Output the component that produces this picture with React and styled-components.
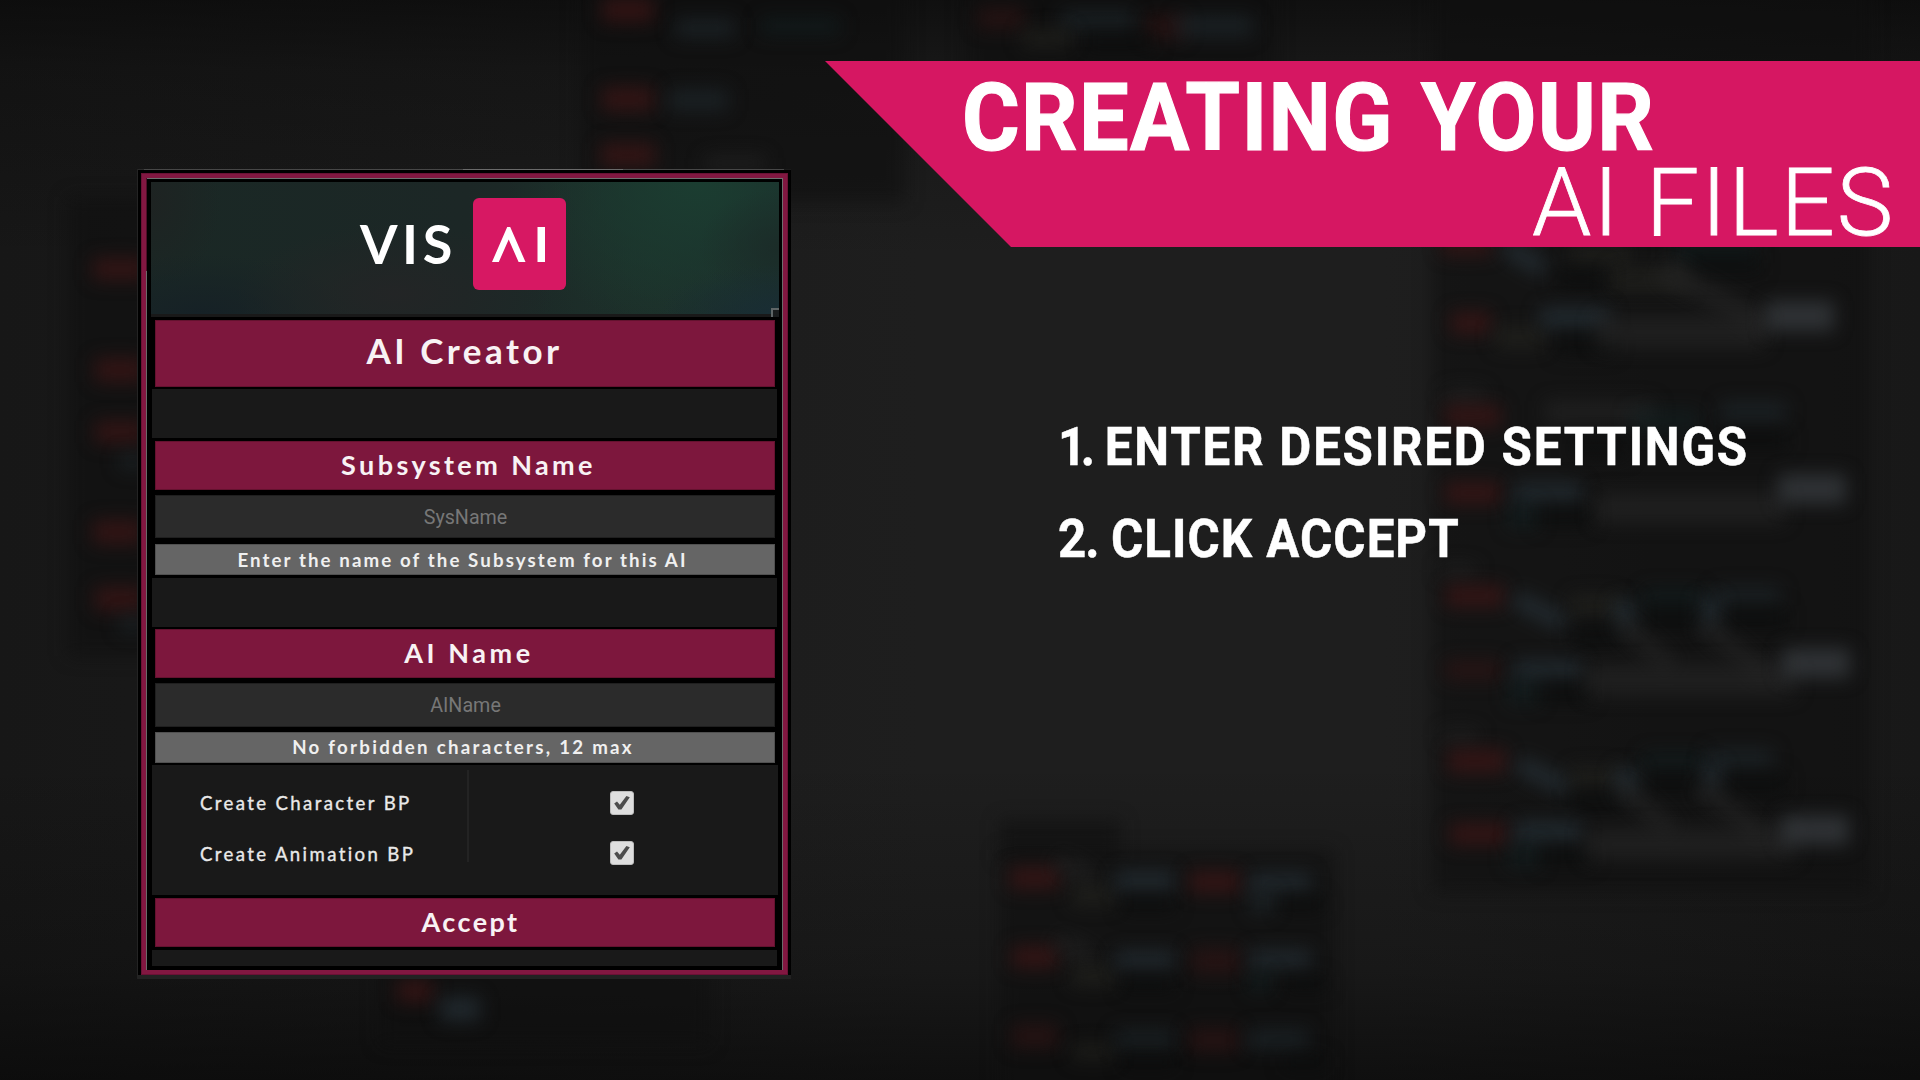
import React from 'react';
import styled, { createGlobalStyle, css } from 'styled-components';

const GlobalStyle = createGlobalStyle`
  * { box-sizing: border-box; }
  body { margin: 0; background: #111; }
`;

const geometric = '"Lato", "Liberation Sans", sans-serif';
const grotesque = '"Roboto", "Liberation Sans", sans-serif';

/* ---------- stage and blurred node graph ---------- */

const Stage = styled.main`
  position: relative;
  width: 1920px;
  height: 1080px;
  overflow: hidden;
  background:
    linear-gradient(180deg, rgba(8, 8, 8, 0.65) 0, rgba(8, 8, 8, 0.3) 70px, rgba(8, 8, 8, 0) 260px),
    linear-gradient(0deg, rgba(6, 6, 6, 0.62) 0, rgba(6, 6, 6, 0.25) 110px, rgba(6, 6, 6, 0) 320px),
    linear-gradient(90deg, #171717 0, #1a1a1a 20%, #1e1e1e 48%, #1e1e1e 72%, #181818 100%);
`;

const Backdrop = styled.div`
  position: absolute;
  inset: 0;
`;

const GraphGroup = styled.div`
  position: absolute;
  left: ${(p) => p.$x}px;
  top: ${(p) => p.$y}px;
  width: ${(p) => p.$w}px;
  height: ${(p) => p.$h}px;
  background: rgba(15, 15, 15, 0.6);
  filter: blur(9px);
`;

const tones = {
  red: 'rgba(64, 22, 22, 0.7)',
  dimRed: 'rgba(50, 20, 20, 0.6)',
  blue: 'rgba(38, 50, 57, 0.7)',
  dimBlue: 'rgba(31, 41, 47, 0.6)',
  teal: 'rgba(18, 35, 37, 0.45)',
  grey: 'rgba(54, 58, 61, 0.8)',
  olive: 'rgba(38, 38, 33, 0.55)',
  wire: 'rgba(38, 38, 38, 0.6)',
  black: 'rgba(10, 12, 12, 0.65)',
};

const Node = styled.div`
  position: absolute;
  left: ${(p) => p.$x - p.$w / 2}px;
  top: ${(p) => p.$y - p.$h / 2}px;
  width: ${(p) => p.$w}px;
  height: ${(p) => p.$h}px;
  background: ${(p) => tones[p.$tone]};
  filter: blur(9px);
  transform: rotate(${(p) => p.$turn || 0}deg);
`;

const groups = [
  [580, -20, 325, 222],
  [965, -20, 310, 110],
  [1432, -20, 438, 912],
  [68, 197, 120, 459],
  [380, 960, 330, 85],
  [1000, 820, 120, 40],
  [1000, 850, 334, 250],
];

const nodes = [
  ['red', 628, 10, 52, 24], ['red', 628, 99, 52, 24], ['red', 628, 155, 54, 24],
  ['dimBlue', 698, 100, 60, 22], ['dimBlue', 705, 28, 60, 20], ['teal', 800, 26, 80, 18],
  ['wire', 735, 163, 60, 14],
  ['dimRed', 1001, 18, 46, 22], ['dimRed', 1165, 27, 40, 24], ['dimBlue', 1098, 20, 74, 20],
  ['dimBlue', 1215, 26, 76, 22], ['olive', 1047, 38, 50, 18], ['black', 1120, 42, 70, 18],
  ['red', 120, 269, 54, 22], ['red', 120, 370, 50, 24], ['red', 120, 432, 50, 22],
  ['red', 118, 532, 50, 24], ['red', 120, 599, 50, 24],
  ['dimBlue', 132, 461, 24, 16], ['dimBlue', 132, 624, 24, 16],
  ['red', 415, 991, 36, 22], ['blue', 460, 1009, 40, 24],
  ['red', 1467, 246, 50, 18], ['blue', 1525, 258, 46, 18, 30], ['teal', 1715, 252, 80, 22],
  ['olive', 1600, 255, 60, 20], ['olive', 1650, 280, 80, 24], ['black', 1580, 278, 50, 22],
  ['black', 1725, 264, 70, 22], ['wire', 1715, 298, 120, 22, 28],
  ['red', 1471, 323, 40, 22], ['olive', 1520, 337, 50, 22], ['blue', 1575, 318, 70, 22],
  ['black', 1585, 344, 60, 22], ['wire', 1680, 332, 170, 32], ['grey', 1800, 316, 68, 30],
  ['wire', 1465, 396, 40, 14],
  ['red', 1473, 416, 56, 22], ['wire', 1600, 412, 110, 22], ['dimBlue', 1753, 412, 66, 20],
  ['teal', 1665, 420, 70, 22], ['black', 1755, 440, 66, 22], ['black', 1600, 448, 56, 20],
  ['red', 1473, 493, 56, 22], ['blue', 1548, 493, 68, 20], ['teal', 1523, 516, 32, 26],
  ['black', 1564, 516, 56, 22], ['wire', 1690, 508, 190, 30], ['grey', 1812, 489, 68, 30],
  ['wire', 1458, 571, 36, 12],
  ['red', 1475, 596, 58, 22], ['blue', 1540, 611, 56, 18, 26], ['olive', 1595, 606, 50, 22],
  ['blue', 1625, 614, 22, 28], ['teal', 1673, 598, 60, 20], ['dimBlue', 1747, 596, 66, 18],
  ['blue', 1710, 612, 22, 28], ['black', 1597, 634, 50, 22], ['black', 1672, 618, 54, 26],
  ['black', 1756, 618, 60, 24], ['wire', 1645, 644, 70, 18, 40], ['wire', 1735, 650, 84, 18, 38],
  ['dimRed', 1473, 670, 56, 20], ['blue', 1548, 670, 68, 20], ['teal', 1524, 692, 32, 26],
  ['black', 1564, 692, 54, 22], ['wire', 1690, 680, 210, 32], ['grey', 1816, 663, 68, 30],
  ['wire', 1460, 736, 36, 12],
  ['red', 1477, 761, 58, 24], ['blue', 1543, 776, 56, 18, 26], ['olive', 1595, 778, 50, 22],
  ['blue', 1627, 781, 24, 26], ['teal', 1673, 761, 60, 18], ['dimBlue', 1740, 759, 66, 20],
  ['blue', 1712, 777, 20, 24], ['black', 1597, 799, 50, 20], ['black', 1672, 784, 54, 24],
  ['black', 1755, 784, 60, 24], ['wire', 1645, 808, 70, 18, 40], ['wire', 1732, 812, 84, 18, 38],
  ['red', 1479, 834, 58, 22], ['blue', 1548, 832, 68, 22], ['teal', 1524, 856, 34, 24],
  ['black', 1566, 856, 54, 20], ['wire', 1690, 844, 210, 32], ['grey', 1815, 830, 68, 30],
  ['red', 1035, 878, 50, 22], ['wire', 1075, 870, 40, 16, 25], ['olive', 1093, 896, 44, 20],
  ['blue', 1145, 881, 60, 20], ['black', 1148, 904, 54, 16], ['red', 1215, 882, 52, 22],
  ['blue', 1280, 882, 62, 18], ['dimBlue', 1262, 902, 24, 22], ['black', 1302, 904, 44, 16],
  ['red', 1035, 957, 46, 22], ['wire', 1075, 950, 40, 16, 25], ['olive', 1093, 976, 44, 20],
  ['blue', 1145, 960, 60, 18], ['black', 1148, 984, 54, 16], ['dimRed', 1216, 961, 50, 26],
  ['blue', 1280, 959, 62, 18], ['teal', 1260, 982, 24, 20], ['black', 1305, 984, 44, 16],
  ['dimRed', 1035, 1036, 46, 24], ['olive', 1093, 1052, 44, 16], ['dimBlue', 1145, 1039, 60, 18],
  ['dimRed', 1214, 1040, 50, 24], ['dimBlue', 1278, 1039, 62, 20], ['black', 1148, 1062, 54, 14],
  ['black', 1305, 1062, 44, 14],
];

/* ---------- page layout ---------- */

const Content = styled.div`
  position: relative;
  display: flex;
  align-items: flex-start;
  height: 100%;
  padding-left: 137px;
`;

/* ---------- AI creator window ---------- */

const Window = styled.section`
  width: 654px;
  margin-top: 169px;
  padding-top: 1px;
  border-left: 1px solid #242424;
  border-bottom: 4px solid #222;
  background: linear-gradient(90deg, #2a2a2a 0 6px, #474747 6px 325px, #6a6a6a 325px 485px, #474747 485px 646px, #1a1a1a 646px)
    top / 100% 1px no-repeat;
`;

const Rim = styled.div`
  padding: 3px 3px 0;
  background: #000;
`;

const PinkFrame = styled.div`
  padding: 5px;
  background: #821741;
  box-shadow: inset 0 0 0 1px #6a1235;
`;

const Hairline = styled.div`
  padding: 1px 1px 0;
  background: linear-gradient(90deg, #4d0f28 0 1px, #6e6e6e 1px) top / 100% 93px no-repeat, #6a6a6a;
`;

const Body = styled.div`
  display: flex;
  flex-direction: column;
  padding: 3px 3px 4px 4px;
  background: #000;
`;

const Header = styled.header`
  position: relative;
  display: flex;
  align-items: flex-start;
  height: 135px;
  padding: 16px 0 0 208px;
  border-bottom: 3px solid #191919;
  background:
    radial-gradient(ellipse 120px 50px at 100% 100%, #192d34 0, rgba(25, 45, 52, 0) 100%),
    radial-gradient(ellipse 80px 60px at 100% 50%, rgba(27, 42, 39, 0.8) 0, rgba(27, 42, 39, 0) 100%),
    radial-gradient(ellipse 190px 150px at 87% 0%, #1b3d31 0, rgba(27, 61, 49, 0) 100%),
    radial-gradient(ellipse 120px 150px at 80% 60%, rgba(29, 51, 43, 0.8) 0, rgba(29, 51, 43, 0) 100%),
    radial-gradient(ellipse 160px 70px at 39% 85%, #232526 0, rgba(35, 37, 38, 0) 100%),
    radial-gradient(ellipse 150px 60px at 8% 100%, #162126 0, rgba(22, 33, 38, 0) 100%),
    radial-gradient(ellipse 70px 90px at 0 15%, #1e2322 0, rgba(30, 35, 34, 0) 100%),
    linear-gradient(90deg, #1a2825, #1c2726 50%, #1c2b28 68%, #1b2d2b);
`;

const ResizeGrip = styled.span`
  position: absolute;
  right: 0;
  bottom: -3px;
  width: 8px;
  height: 9px;
  border-top: 2px solid #5f6667;
  border-left: 2px solid #5f6667;
  background: #191c1d;
`;

const LogoWord = styled.span`
  width: 114px;
  padding: 14px 0 0 1px;
  color: #fff;
  font: 700 54px/64px ${geometric};
  letter-spacing: 4.6px;
`;

const LogoTile = styled.span`
  display: flex;
  align-items: center;
  justify-content: center;
  width: 93px;
  height: 92px;
  border-radius: 6px;
  background: #d71863;
`;

const row = css`
  display: flex;
  align-items: center;
  justify-content: center;
  flex: none;
  height: ${(p) => p.$h}px;
  margin: ${(p) => p.$gap}px 4px 0;
  padding: ${(p) => p.$pad || 0};
  white-space: nowrap;
`;

const Bar = styled.div`
  ${row}
  border: 1px solid #64122f;
  background: #7d173d;
  color: #f8f2f4;
  font: 700 ${(p) => p.$size || 27}px/1.2 ${geometric};
  letter-spacing: ${(p) => p.$track}px;
`;

const AcceptButton = styled(Bar).attrs({ as: 'button' })`
  border-radius: 0;
`;

const Field = styled.div`
  ${row}
  border: 1px solid #1f1f1f;
  background: #2b2b2b;
  color: #777;
  font: 400 19.7px/1.2 ${grotesque};
`;

const Hint = styled.div`
  ${row}
  border: 1px solid #505050;
  background: #656565;
  color: #f0f0f0;
  font: 700 18.7px/1.2 ${geometric};
  letter-spacing: ${(p) => p.$track}px;
`;

const Spacer = styled.div`
  flex: none;
  height: ${(p) => p.$h}px;
  margin: ${(p) => p.$gap}px 2px 0 1px;
  background: #191919;
`;

const Options = styled.div`
  display: grid;
  grid-template-columns: 315px 1fr;
  align-items: start;
  height: 130px;
  margin: 2px 1px 0;
  padding-top: 5px;
  background: #191919;
`;

const Labels = styled.div`
  display: flex;
  flex-direction: column;
  gap: 1px;
  padding: 8px 0 0 48px;
`;

const Label = styled.span`
  height: 50px;
  color: #e9e9e9;
  font: 400 18.6px/51px ${geometric};
  letter-spacing: 2.38px;
  white-space: nowrap;
  -webkit-text-stroke: 0.35px #e9e9e9;
`;

const Checks = styled.div`
  display: flex;
  flex-direction: column;
  align-items: center;
  gap: 26px;
  height: 92px;
  padding: 21px 4px 0 0;
  border-left: 2px solid #232323;
`;

const Checkbox = styled.span`
  display: flex;
  align-items: center;
  justify-content: center;
  flex: none;
  width: 24px;
  height: 24px;
  border: 1px solid #bdbdbd;
  border-radius: 3px;
  background: #dedede;
`;

const CheckMark = () => (
  <svg width="18" height="18" viewBox="0 0 18 18">
    <path d="M1.2 9.4 4 7.6 6.8 10.8 13.4 2 16.8 3.2 8.4 15.4 5.4 15.4Z" fill="#4c4c4c" />
  </svg>
);

/* ---------- headline and steps ---------- */

const Side = styled.div`
  flex: 1;
  padding: 61px 0 0 34px;
`;

const Banner = styled.div`
  display: flex;
  flex-direction: column;
  gap: 5px;
  height: 186px;
  padding: 16px 28px 0 137px;
  background: #d61762;
  clip-path: polygon(0 0, 100% 0, 100% 100%, 186px 100%);
`;

const Headline = styled.h1`
  margin: 0;
  color: #fff;
  font: 700 95px/81px ${grotesque};
  letter-spacing: 1.4px;
  word-spacing: 4px;
  white-space: nowrap;
  transform: scaleX(0.93);
  transform-origin: left;
  -webkit-text-stroke: 1.2px #fff;
`;

const Subline = styled.div`
  align-self: flex-end;
  color: #fff;
  font: 300 95px/80px ${grotesque};
  letter-spacing: 2px;
  margin-right: -3px;
  white-space: nowrap;
  -webkit-text-stroke: 0.8px #fff;
`;

const Steps = styled.div`
  display: flex;
  flex-direction: column;
  gap: 32px;
  padding: 170px 0 0 233px;
`;

const Step = styled.div`
  color: #fff;
  font: 700 53px/60px ${grotesque};
  letter-spacing: ${(p) => p.$track}px;
  white-space: nowrap;
  transform: scaleX(0.93);
  transform-origin: left;
  -webkit-text-stroke: 0.5px #fff;
`;

const StepNumber = styled.span`
  margin-right: ${(p) => p.$tuck}px;
  letter-spacing: ${(p) => p.$track}px;
`;

export default function App() {
  return (
    <Stage>
      <GlobalStyle />
      <Backdrop>
        {groups.map(([x, y, w, h], i) => (
          <GraphGroup key={i} $x={x} $y={y} $w={w} $h={h} />
        ))}
        {nodes.map(([tone, x, y, w, h, turn], i) => (
          <Node key={i} $tone={tone} $x={x} $y={y} $w={w} $h={h} $turn={turn} />
        ))}
      </Backdrop>
      <Content>
        <Window>
          <Rim>
            <PinkFrame>
              <Hairline>
                <Body>
                  <Header>
                    <LogoWord>VIS</LogoWord>
                    <LogoTile>
                      <svg width="93" height="92" viewBox="0 0 93 92" fill="#fff">
                        <path d="M19 64 34.2 29H37.2L52.5 64H45.6L35.7 41.5 25.8 64Z" />
                        <path d="M64.5 29H72V64H64.5Z" />
                      </svg>
                    </LogoTile>
                    <ResizeGrip />
                  </Header>
                  <Bar $h={67} $gap={3} $size={35} $track={3.5} $pad="0 1px 8px 0">AI Creator</Bar>
                  <Spacer $h={49} $gap={2} />
                  <Bar $h={49} $gap={3} $track={3.4} $pad="0 0 0 7px">Subsystem Name</Bar>
                  <Field $h={43} $gap={5} $pad="2px 0 0 1px">SysName</Field>
                  <Hint $h={31} $gap={6} $track={2.1} $pad="2px 5px 0 0">
                    Enter the name of the Subsystem for this AI
                  </Hint>
                  <Spacer $h={49} $gap={3} />
                  <Bar $h={49} $gap={2} $track={3.6} $pad="0 0 0 8px">AI Name</Bar>
                  <Field $h={44} $gap={5} $pad="2px 0 0 1px">AIName</Field>
                  <Hint $h={31} $gap={5} $track={2.26} $pad="0 4px 0 0">
                    No forbidden characters, 12 max
                  </Hint>
                  <Options>
                    <Labels>
                      <Label>Create Character BP</Label>
                      <Label>Create Animation BP</Label>
                    </Labels>
                    <Checks>
                      <Checkbox><CheckMark /></Checkbox>
                      <Checkbox><CheckMark /></Checkbox>
                    </Checks>
                  </Options>
                  <AcceptButton $h={49} $gap={3} $track={2.4} $pad="0 0 1px 11px">Accept</AcceptButton>
                  <Spacer $h={16} $gap={3} />
                </Body>
              </Hairline>
            </PinkFrame>
          </Rim>
        </Window>
        <Side>
          <Banner>
            <Headline>CREATING YOUR</Headline>
            <Subline>AI FILES</Subline>
          </Banner>
          <Steps>
            <Step $track={1.9}>
              <StepNumber $track={-6} $tuck={1.5}>1.</StepNumber> ENTER DESIRED SETTINGS
            </Step>
            <Step $track={1.1}>
              <StepNumber $track={-1} $tuck={-1}>2.</StepNumber> CLICK ACCEPT
            </Step>
          </Steps>
        </Side>
      </Content>
    </Stage>
  );
}
